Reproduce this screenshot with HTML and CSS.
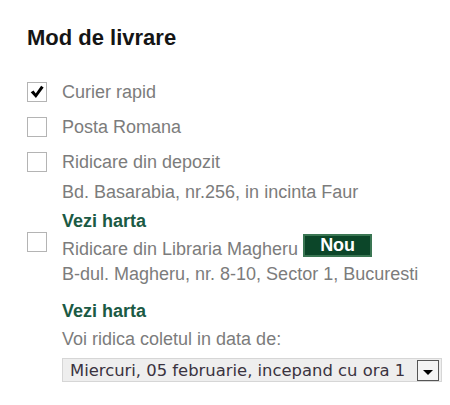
FILE: index.html
```html
<!DOCTYPE html>
<html lang="ro">
<head>
<meta charset="utf-8">
<title>Mod de livrare</title>
<link rel="stylesheet" href="styles.css">
</head>
<body>
<section class="panel">
  <h2 class="title">Mod de livrare</h2>

  <div class="option opt-1">
    <span class="box checked">
      <svg viewBox="0 0 20 20" width="20" height="20" aria-hidden="true">
        <path d="M3 10.4 L6.2 8.2 L8.6 11.8 L14.6 3 L17.4 5 L8.8 16.8 Z" fill="#000"/>
      </svg>
    </span>
    <div class="content"><div class="line">Curier rapid</div></div>
  </div>

  <div class="option opt-2">
    <span class="box"></span>
    <div class="content"><div class="line">Posta Romana</div></div>
  </div>

  <div class="option opt-3">
    <span class="box"></span>
    <div class="content">
      <div class="line">Ridicare din depozit</div>
      <div class="line addr">Bd. Basarabia, nr.256, in incinta Faur</div>
      <div class="line map">Vezi harta</div>
    </div>
  </div>

  <div class="option opt-4">
    <span class="box"></span>
    <div class="content">
      <div class="line-new">
        <span class="line">Ridicare din Libraria Magheru</span>
        <span class="badge">Nou</span>
      </div>
      <div class="line addr2">B-dul. Magheru, nr. 8-10, Sector 1, Bucuresti</div>
      <div class="line map2">Vezi harta</div>
      <div class="line pick">Voi ridica coletul in data de:</div>
      <div class="select">
        <span class="select-text">Miercuri, 05 februarie, incepand cu ora 1</span>
        <span class="select-btn"><span class="arrow"></span></span>
      </div>
    </div>
  </div>
</section>
</body>
</html>
```

FILE: styles.css
```css
html, body {
  margin: 0;
  padding: 0;
  background: #ffffff;
}

body {
  font-family: "Liberation Sans", Arial, sans-serif;
  color: #7c7c7c;
}

.panel {
  padding: 25px 0 0 27px;
}

.title {
  margin: 0;
  font-size: 22px;
  line-height: 26px;
  font-weight: bold;
  color: #151515;
}

.option {
  display: flex;
  align-items: flex-start;
  gap: 15px;
}

.opt-1 { margin-top: 31px; }
.opt-2 { margin-top: 15px; }
.opt-3 { margin-top: 15px; }
.opt-4 { margin-top: 1px; }

.box {
  flex: none;
  width: 20px;
  height: 20px;
  box-sizing: border-box;
  border: 1px solid #b4b4b4;
  background: #fff;
  display: flex;
  align-items: center;
  justify-content: center;
}

.box svg {
  display: block;
}

.content {
  display: flex;
  flex-direction: column;
}

.line {
  font-size: 18px;
  line-height: 20px;
  white-space: nowrap;
}

.addr { margin-top: 10px; }

.map {
  margin-top: 9px;
  font-weight: bold;
  color: #1b5a44;
}

.line-new {
  display: flex;
  align-items: flex-start;
  gap: 5px;
  margin-top: 2px;
}

.line-new .line {
  margin-top: 5px;
}

.badge {
  height: 23px;
  box-sizing: border-box;
  padding: 0 15px;
  background: #0c4629;
  border: 2px solid #3a7653;
  color: #ffffff;
  font-weight: bold;
  font-size: 18px;
  line-height: 19px;
}

.addr2 { margin-top: 5px; }

.map2 {
  margin-top: 17px;
  font-weight: bold;
  color: #1b5a44;
}

.pick { margin-top: 8px; }

.select {
  margin-top: 9px;
  width: 380px;
  height: 24px;
  box-sizing: border-box;
  border: 1px solid #d6d6d6;
  background: #eeeeee;
  display: flex;
  align-items: center;
  justify-content: space-between;
  padding: 0 2px 0 7px;
}

.select-text {
  font-family: "DejaVu Sans", Verdana, sans-serif;
  font-size: 16.4px;
  color: #3a3340;
  white-space: nowrap;
}

.select-btn {
  width: 22px;
  height: 21px;
  box-sizing: border-box;
  border: 1px solid #555555;
  background: #f4f4f4;
  display: flex;
  align-items: flex-end;
  justify-content: center;
  padding-bottom: 5px;
}

.arrow {
  width: 0;
  height: 0;
  border-left: 5px solid transparent;
  border-right: 5px solid transparent;
  border-top: 5px solid #000000;
}
```
